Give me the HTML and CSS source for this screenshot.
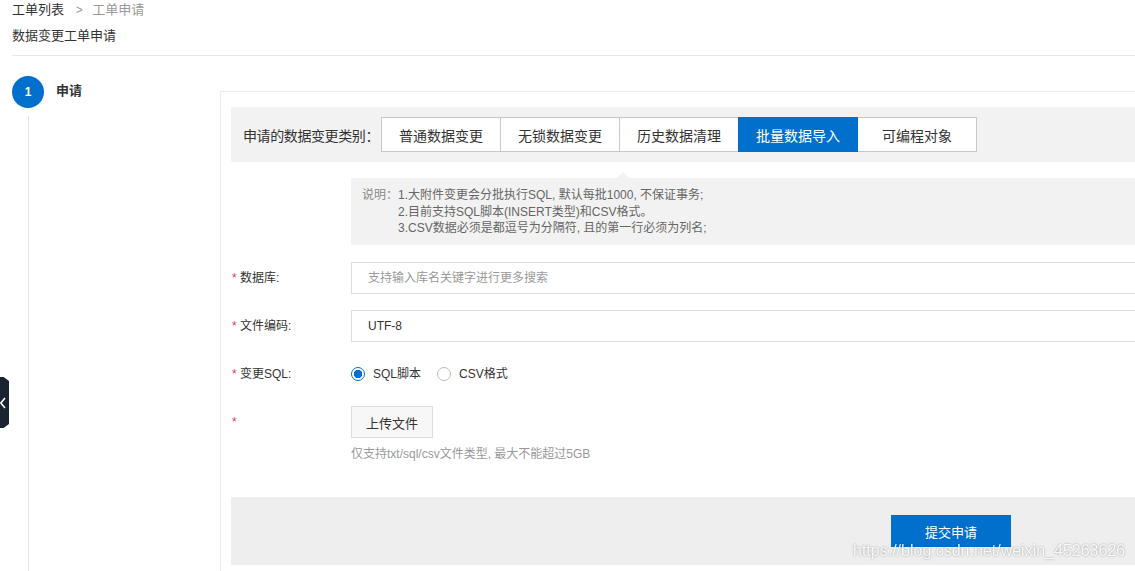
FILE: index.html
```html
<!DOCTYPE html>
<html lang="zh-CN">
<head>
  <meta charset="UTF-8">
  <title>数据变更工单申请</title>
  <link rel="stylesheet" href="styles.css">
</head>
<body>
  <div class="header">
    <div class="breadcrumb">
      <span class="crumb">工单列表</span>
      <span class="sep">&gt;</span>
      <span class="crumb current">工单申请</span>
    </div>
    <div class="page-title">数据变更工单申请</div>
  </div>

  <div class="main">
    <div class="steps">
      <div class="step">
        <span class="step-num">1</span>
        <span class="step-name">申请</span>
      </div>
      <div class="step-line"></div>
    </div>

    <div class="panel">
      <div class="type-bar">
        <span class="type-label">申请的数据变更类别：</span>
        <div class="tabs">
          <button class="tab">普通数据变更</button>
          <button class="tab">无锁数据变更</button>
          <button class="tab">历史数据清理</button>
          <button class="tab active">批量数据导入</button>
          <button class="tab">可编程对象</button>
        </div>
      </div>

      <div class="note">
        <span class="note-title">说明：</span>
        <div class="note-lines">
          <div>1.大附件变更会分批执行SQL, 默认每批1000, 不保证事务;</div>
          <div>2.目前支持SQL脚本(INSERT类型)和CSV格式。</div>
          <div>3.CSV数据必须是都逗号为分隔符, 且的第一行必须为列名;</div>
        </div>
      </div>

      <div class="form">
        <div class="row">
          <label class="label"><i>*</i> 数据库:</label>
          <div class="field"><input class="input" type="text" placeholder="支持输入库名关键字进行更多搜索"></div>
        </div>
        <div class="row">
          <label class="label"><i>*</i> 文件编码:</label>
          <div class="field"><input class="input" type="text" value="UTF-8"></div>
        </div>
        <div class="row">
          <label class="label"><i>*</i> 变更SQL:</label>
          <div class="field radios">
            <span class="radio checked"></span><span class="radio-text">SQL脚本</span>
            <span class="radio"></span><span class="radio-text">CSV格式</span>
          </div>
        </div>
        <div class="row upload-row">
          <label class="label"><i>*</i></label>
          <div class="field">
            <button class="upload-btn">上传文件</button>
            <div class="hint">仅支持txt/sql/csv文件类型, 最大不能超过5GB</div>
          </div>
        </div>
      </div>

      <div class="footer">
        <button class="submit-btn">提交申请</button>
      </div>
    </div>
  </div>

  <div class="side-toggle">
    <svg width="6" height="12" viewBox="0 0 6 12"><path d="M5 1 L0.8 6 L5 11" fill="none" stroke="#fff" stroke-width="1.6"/></svg>
  </div>

  <div class="watermark">https://blog.csdn.net/weixin_45263626</div>
</body>
</html>
```

FILE: styles.css
```css
html, body {
  overflow: hidden;
}

body {
  margin: 0;
  height: 571px;
  font-family: "Liberation Sans", "Noto Sans CJK SC", sans-serif;
  font-size: 12px;
  color: #333;
  background: #fff;
  display: flex;
  flex-direction: column;
}

.header {
  margin-left: 12px;
  border-bottom: 1px solid #e8e8e8;
}

.breadcrumb {
  height: 20px;
  line-height: 20px;
  font-size: 13px;
}

.breadcrumb .sep {
  color: #999;
  margin: 0 6px 0 8px;
  font-size: 12px;
}

.breadcrumb .current {
  color: #999;
}

.page-title {
  font-size: 13px;
  line-height: 20px;
  margin-top: 6px;
  padding-bottom: 9px;
}

.main {
  flex: 1;
  display: flex;
}

.steps {
  width: 220px;
  flex-shrink: 0;
  display: flex;
  flex-direction: column;
  padding-top: 20px;
}

.step {
  display: flex;
  align-items: center;
  margin-left: 12px;
}

.step-num {
  width: 32px;
  height: 32px;
  border-radius: 50%;
  background: #0070cc;
  color: #fff;
  font-size: 12px;
  font-weight: bold;
  display: flex;
  align-items: center;
  justify-content: center;
}

.step-name {
  margin-left: 12px;
  font-size: 13px;
  font-weight: bold;
  line-height: 16px;
  margin-bottom: 3px;
}

.step-line {
  flex: 1;
  margin: 8px 0 0 28px;
  border-left: 1px solid #e3e3e3;
}

.panel {
  flex: 1;
  margin-top: 35px;
  border-top: 1px solid #ececec;
  border-left: 1px solid #ececec;
  padding: 15px 0 0 10px;
  overflow: hidden;
}

.type-bar {
  height: 55px;
  background: #f2f2f2;
  display: flex;
  align-items: center;
  padding-left: 12px;
}

.type-label {
  font-size: 14px;
  width: 138px;
  flex-shrink: 0;
  white-space: nowrap;
  letter-spacing: -0.4px;
}

.tabs {
  display: flex;
}

.tab {
  width: 120px;
  height: 35px;
  margin-left: -1px;
  border: 1px solid #c8c8c8;
  background: #fff;
  color: #333;
  font-family: inherit;
  font-size: 14px;
  padding: 0;
}

.tab:first-child {
  margin-left: 0;
}

.tab.active {
  background: #0070cc;
  border-color: #0070cc;
  color: #fff;
  position: relative;
}

.note {
  position: relative;
  margin: 16px 0 0 120px;
  height: 67px;
  box-sizing: border-box;
  background: #f2f2f2;
  color: #666;
  display: flex;
  padding: 9px 0 0 11px;
  line-height: 16.5px;
}

.note::before {
  content: "";
  position: absolute;
  top: -6px;
  left: 266px;
  border-left: 6px solid transparent;
  border-right: 6px solid transparent;
  border-bottom: 6px solid #f2f2f2;
}

.note-title {
  color: #888;
}

.form {
  margin-top: 17px;
}

.row {
  display: flex;
  min-height: 32px;
  margin-bottom: 16px;
}

.label {
  width: 120px;
  flex-shrink: 0;
  line-height: 32px;
  padding-left: 1px;
  box-sizing: border-box;
}

.label i {
  color: #e64545;
  font-style: normal;
}

.field {
  flex: 1;
}

.input {
  display: block;
  width: calc(100% + 10px);
  height: 32px;
  box-sizing: border-box;
  border: 1px solid #dcdcdc;
  padding: 0 16px;
  font-family: inherit;
  font-size: 12px;
  color: #333;
  outline: none;
}

.input::placeholder {
  color: #999;
}

.radios {
  display: flex;
  align-items: center;
}

.radio {
  width: 14px;
  height: 14px;
  box-sizing: border-box;
  border: 1px solid #bbb;
  border-radius: 50%;
  background: #fff;
}

.radio.checked {
  border-color: #0070cc;
  background: radial-gradient(circle, #0070cc 0 4px, #fff 4.5px);
}

.radio-text {
  margin: 0 16px 0 8px;
  line-height: 16px;
}

.upload-btn {
  width: 82px;
  height: 32px;
  border: 1px solid #ddd;
  background: #f7f7f7;
  font-family: inherit;
  font-size: 13px;
  color: #333;
  padding: 0;
}

.hint {
  margin-top: 8px;
  line-height: 16px;
  color: #999;
}

.footer {
  margin-top: 35px;
  height: 68px;
  box-sizing: border-box;
  background: #eee;
  padding: 18px 0 0 660px;
}

.submit-btn {
  width: 120px;
  height: 32px;
  border: none;
  background: #0070cc;
  color: #fff;
  font-family: inherit;
  font-size: 13px;
}

.side-toggle {
  position: fixed;
  left: 0;
  top: 377px;
  width: 9px;
  height: 51px;
  background: #1b2231;
  clip-path: polygon(0 0, 40% 0, 100% 8%, 100% 92%, 40% 100%, 0 100%);
  display: flex;
  align-items: center;
}

.watermark {
  position: fixed;
  left: 853px;
  top: 542px;
  font-size: 16px;
  color: rgba(255, 255, 255, 0.9);
  text-shadow: 0 0 2px rgba(0, 0, 0, 0.4);
  white-space: nowrap;
}
```
